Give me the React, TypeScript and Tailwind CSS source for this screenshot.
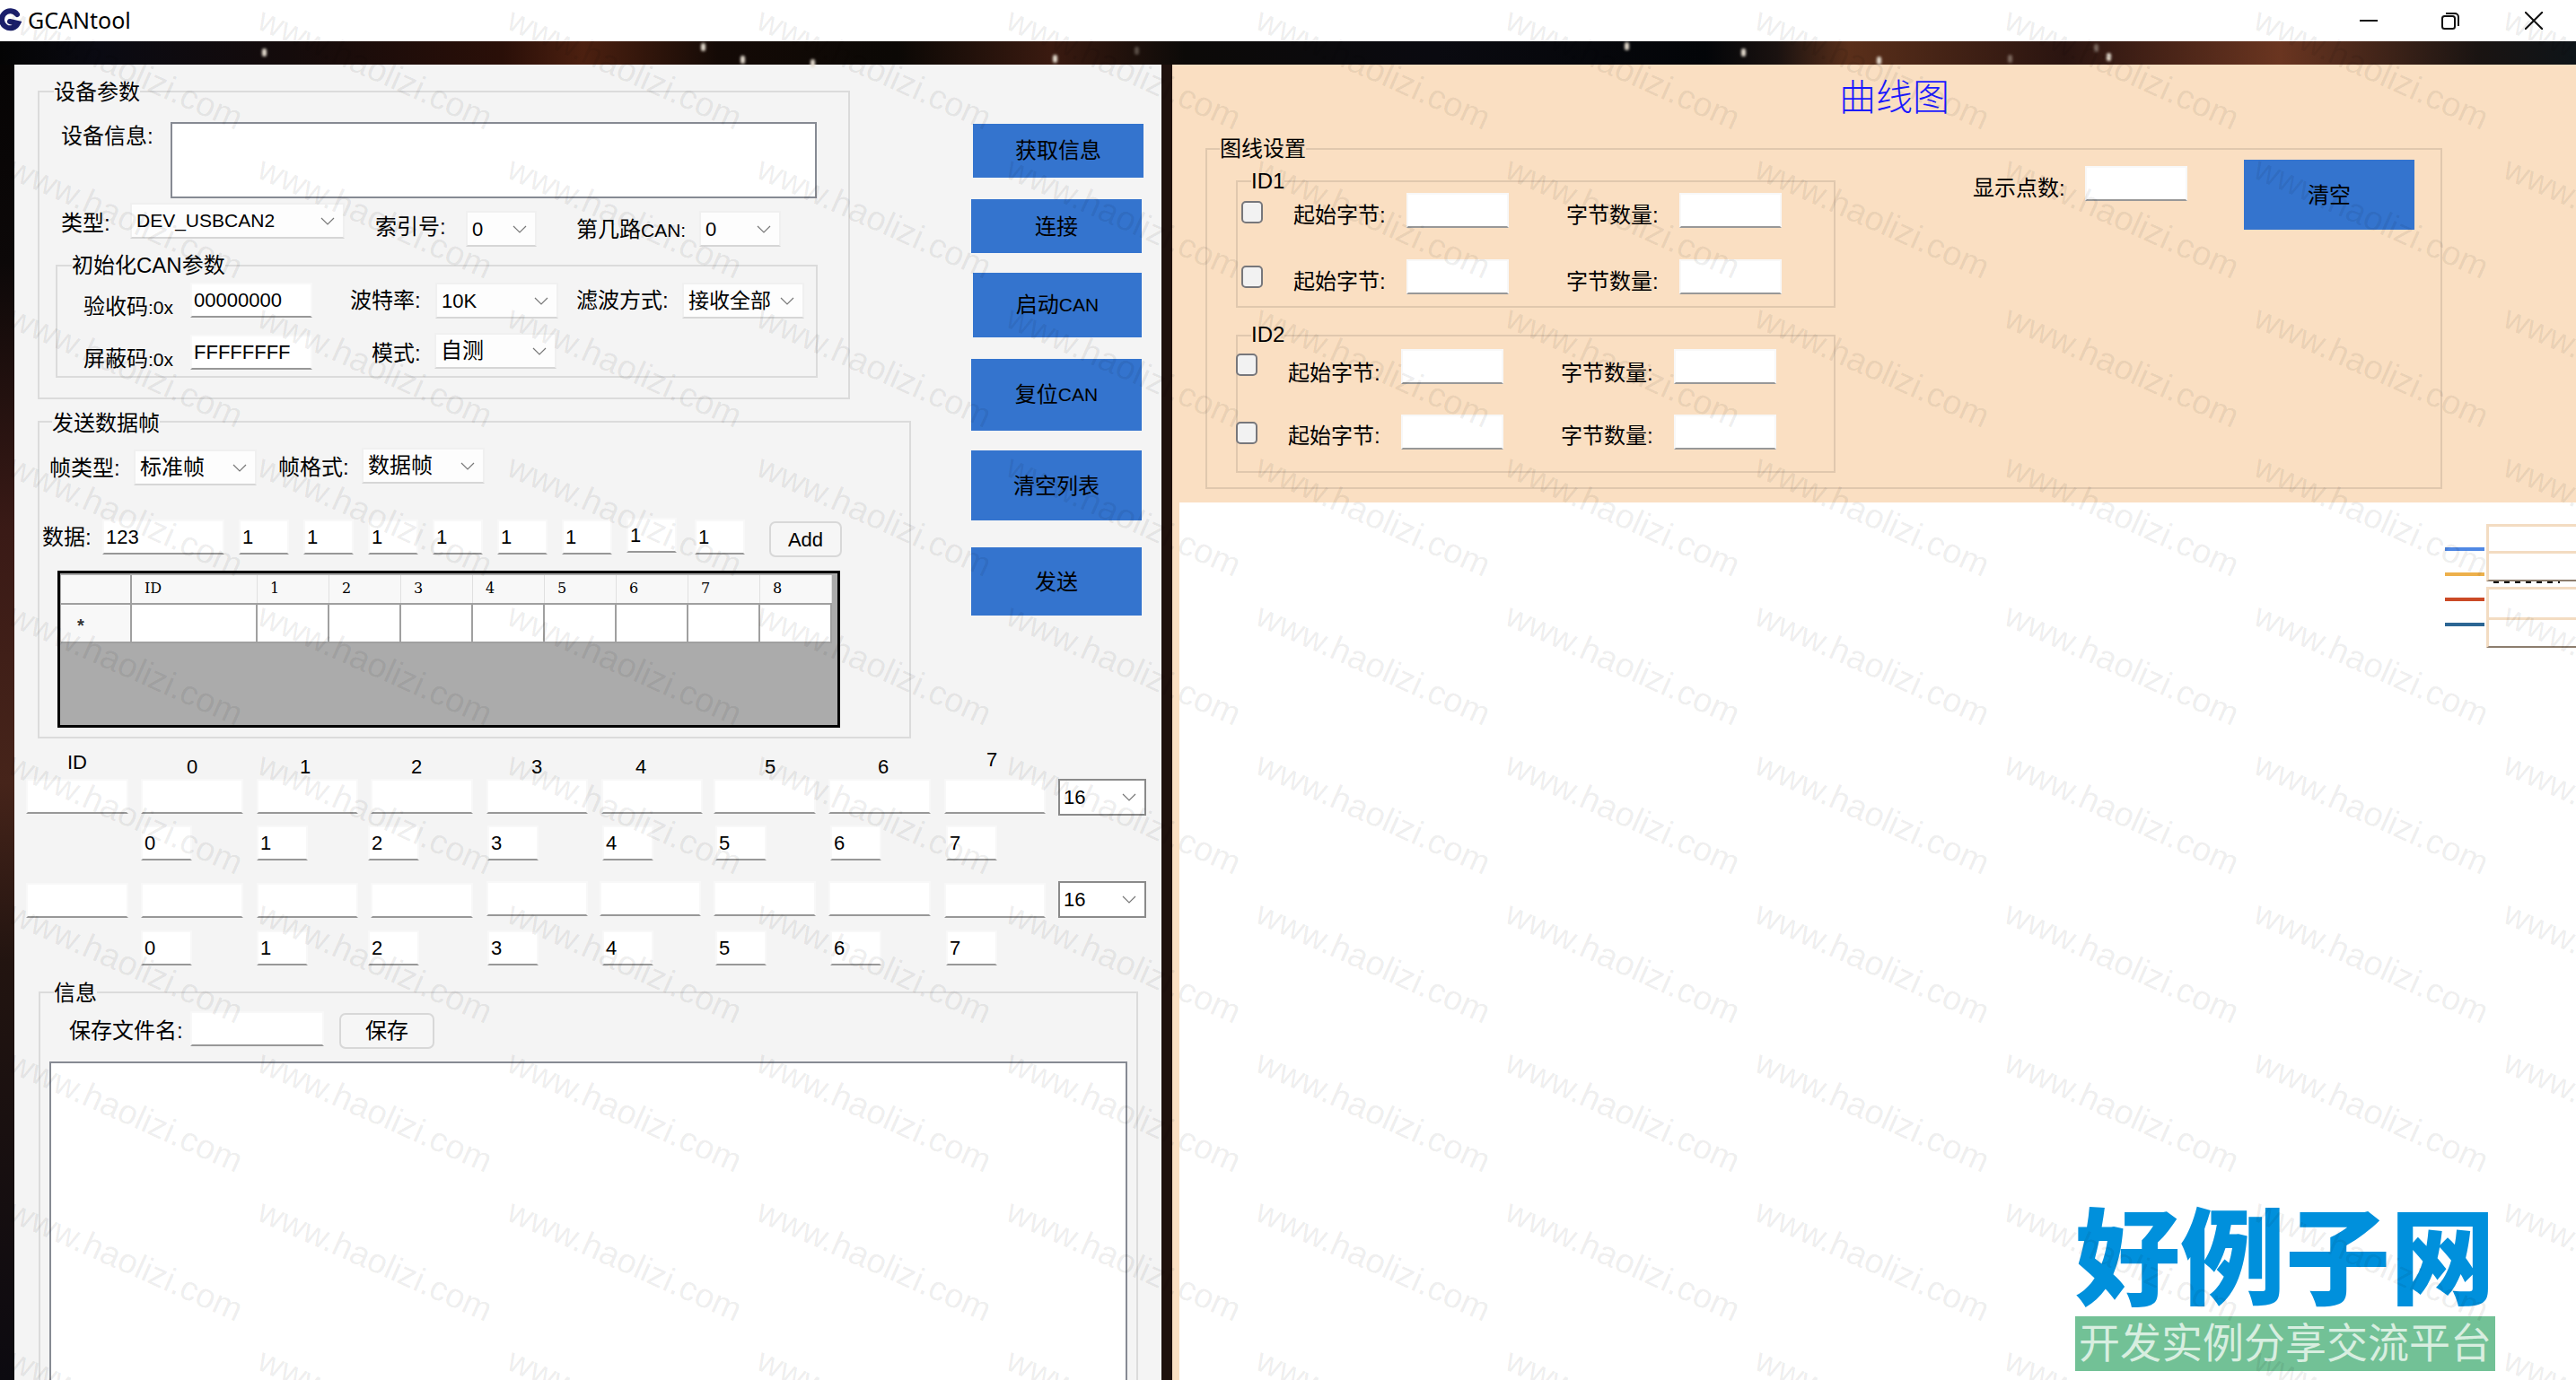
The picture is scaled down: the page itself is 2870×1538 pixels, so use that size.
import type { ReactNode } from "react";
import clsx from "clsx";

const stars = [
  "left-[292px] top-[8px]",
  "left-[781px] top-[2px]",
  "left-[825px] top-[16px]",
  "left-[903px] top-[20px]",
  "left-[1173px] top-[15px]",
  "left-[1264px] top-[6px] opacity-30",
  "left-[1810px] top-[1px]",
  "left-[1940px] top-[8px]",
  "left-[2091px] top-[17px]",
  "left-[2237px] top-[15px] opacity-40",
  "left-[2333px] top-[3px] opacity-40",
  "left-[2347px] top-[13px]",
];

function Label({ children, className }: { children: ReactNode; className?: string }) {
  return (
    <div className={clsx("h-[32px] shrink-0 whitespace-nowrap text-[24px] leading-[32px] text-black", className)}>
      {children}
    </div>
  );
}

function Can({ children }: { children: ReactNode }) {
  return <span className="text-[21px]">{children}</span>;
}

function Field({ value = "", className }: { value?: string; className?: string }) {
  return (
    <input
      readOnly
      defaultValue={value}
      className={clsx(
        "box-border block h-[39px] shrink-0 border-2 border-black/[0.03] border-b-black/40 bg-white pl-[2px] text-[22px] text-black outline-none",
        className
      )}
    />
  );
}

function Combo({ children, className }: { children: ReactNode; className?: string }) {
  return (
    <div
      className={clsx(
        "box-border flex h-[40px] shrink-0 items-center justify-between border-2 border-black/5 border-b-black/15 bg-[#fdfdfd] pl-[5px] pr-[9px] text-black",
        className
      )}
    >
      <span className="whitespace-nowrap">{children}</span>
      <svg width="16" height="9" viewBox="0 0 16 9" fill="none" stroke="#777" strokeWidth="1.2">
        <path d="M1 1l7 7 7-7" />
      </svg>
    </div>
  );
}

function BaseCombo() {
  return (
    <div className="ml-[14px] box-border flex h-[41px] w-[98px] shrink-0 items-center justify-between border-2 border-solid border-[#8a8a8a] bg-white pl-[4px] pr-[9px] text-[22px] text-black">
      <span>16</span>
      <svg width="16" height="9" viewBox="0 0 16 9" fill="none" stroke="#777" strokeWidth="1.2">
        <path d="M1 1l7 7 7-7" />
      </svg>
    </div>
  );
}

function Group({
  title,
  legend,
  className,
  children,
}: {
  title: string;
  legend: string;
  className?: string;
  children: ReactNode;
}) {
  return (
    <div className={clsx("relative box-border shrink-0 border-2 border-black/10", className)}>
      <span className={clsx("absolute whitespace-nowrap text-[24px] leading-[28px] text-black", legend)}>{title}</span>
      {children}
    </div>
  );
}

function Blue({ children, className }: { children: ReactNode; className?: string }) {
  return (
    <div className={clsx("flex shrink-0 items-center justify-center bg-[#3474ce] text-[24px] text-black", className)}>
      {children}
    </div>
  );
}

function Check({ className }: { className?: string }) {
  return (
    <input
      type="checkbox"
      readOnly
      className={clsx(
        "box-border block h-[25px] w-[24px] shrink-0 appearance-none rounded-[5px] border-2 border-[#77777b] bg-[#f2f2f2]",
        className
      )}
    />
  );
}

function Small({ value, className }: { value: string; className?: string }) {
  return <Field value={value} className={clsx("w-[57px]", className)} />;
}

function Watermark() {
  const cells = Array.from({ length: 132 });
  return (
    <div className="pointer-events-none absolute inset-0 overflow-hidden">
      <div className="absolute left-[-258px] top-[-165px] grid grid-cols-[repeat(12,278px)] auto-rows-[166px]">
        {cells.map((_, i) => (
          <span
            key={i}
            className="block origin-top-left rotate-[24deg] whitespace-nowrap text-[38px] leading-[40px] text-black/[0.08]"
          >
            www.haolizi.com
          </span>
        ))}
      </div>
    </div>
  );
}

function LeftPanel() {
  return (
    <div className="w-[1278px] shrink-0 overflow-hidden bg-[#f4f4f4]">
      <div className="flex pl-[26px] pt-[29px]">
        <div className="w-[973px] shrink-0">
          <Group title="设备参数" legend="left-[16px] top-[-14px] bg-[#f4f4f4]" className="h-[344px] w-[905px]">
            <div className="ml-[24px] mt-[33px] flex items-start">
              <Label className="w-[122px]">设备信息:</Label>
              <div className="box-border h-[85px] w-[720px] border-2 border-[#868a93] bg-white" />
            </div>
            <div className="ml-[24px] mt-[5px] flex h-[49px] items-start">
              <Label className="mt-[7px] w-[77px]">类型:</Label>
              <Combo className="w-[239px] text-[21px]">DEV_USBCAN2</Combo>
              <Label className="ml-[34px] mt-[11px] w-[101px]">索引号:</Label>
              <Combo className="mt-[9px] w-[79px] text-[22px]">0</Combo>
              <Label className="ml-[44px] mt-[14px] w-[137px]">
                第几路<Can>CAN:</Can>
              </Label>
              <Combo className="mt-[9px] w-[91px] text-[22px]">0</Combo>
            </div>
            <Group
              title="初始化CAN参数"
              legend="left-[16px] top-[-15px] bg-[#f4f4f4]"
              className="ml-[18px] mt-[20px] h-[126px] w-[849px]"
            >
              <div className="ml-[29px] mt-[18px] flex h-[56px] items-start">
                <Label className="mt-[11px] w-[119px]">
                  验收码<Can>:0x</Can>
                </Label>
                <Field value="00000000" className="w-[136px]" />
                <Label className="ml-[42px] mt-[4px] w-[95px]">波特率:</Label>
                <Combo className="w-[137px] text-[22px]">10K</Combo>
                <Label className="ml-[20px] mt-[4px] w-[118px]">滤波方式:</Label>
                <Combo className="w-[136px] text-[23px]">接收全部</Combo>
              </div>
              <div className="ml-[29px] flex items-start">
                <Label className="mt-[13px] w-[119px]">
                  屏蔽码<Can>:0x</Can>
                </Label>
                <Field value="FFFFFFFF" className="mt-[2px] w-[136px]" />
                <Label className="ml-[66px] mt-[7px] w-[70px]">模式:</Label>
                <Combo className="w-[136px] text-[24px]">自测</Combo>
              </div>
            </Group>
          </Group>

          <Group title="发送数据帧" legend="left-[14px] top-[-13px] bg-[#f4f4f4]" className="mt-[24px] h-[354px] w-[973px]">
            <div className="ml-[11px] mt-[28px] flex h-[78px] items-start">
              <Label className="mt-[7px] w-[94px]">帧类型:</Label>
              <Combo className="mt-[2px] w-[137px] text-[24px]">标准帧</Combo>
              <Label className="ml-[24px] mt-[6px] w-[93px]">帧格式:</Label>
              <Combo className="w-[137px] text-[24px]">数据帧</Combo>
            </div>
            <div className="ml-[3px] flex h-[59px] items-start">
              <Label className="mt-[6px] w-[67px]">数据:</Label>
              <Field value="123" className="mt-[2px] w-[136px]" />
              <Field value="1" className="ml-[16px] mt-[2px] w-[56px]" />
              <Field value="1" className="ml-[16px] mt-[2px] w-[56px]" />
              <Field value="1" className="ml-[16px] mt-[2px] w-[56px]" />
              <Field value="1" className="ml-[16px] mt-[2px] w-[56px]" />
              <Field value="1" className="ml-[16px] mt-[2px] w-[56px]" />
              <Field value="1" className="ml-[16px] mt-[2px] w-[56px]" />
              <Field value="1" className="ml-[16px] w-[56px]" />
              <Field value="1" className="ml-[20px] mt-[2px] w-[56px]" />
              <div className="ml-[27px] mt-[4px] box-border flex h-[40px] w-[81px] items-center justify-center rounded-[7px] border-2 border-[#d8d8d8] bg-[#f6f6f6] text-[22px] text-black">
                Add
              </div>
            </div>
            <div className="ml-[20px] box-border h-[175px] w-[872px] border-[3px] border-black bg-[#ababab] pl-[1px] pt-[2px]">
              <div className="grid h-[33px] w-[859px] grid-cols-[79px_140px_repeat(8,80px)] border-b-2 border-[#a0a0a0] bg-[#f8f8f8] text-[16px] leading-[29px] text-black [font-family:'DejaVu_Serif',serif]">
                <div className="border-r-2 border-[#a0a0a0]" />
                {["ID", "1", "2", "3", "4", "5", "6", "7", "8"].map((h) => (
                  <div key={h} className="border-r border-[#e0e0e0] pl-[14px]">
                    {h}
                  </div>
                ))}
              </div>
              <div className="grid h-[43px] w-[859px] grid-cols-[79px_140px_repeat(8,80px)] border-b-2 border-[#a0a0a0] bg-white">
                <div className="flex items-center border-r-2 border-[#a0a0a0] bg-[#f8f8f8] pl-[18px] pt-[4px] text-[20px] font-bold text-[#333]">
                  *
                </div>
                {Array.from({ length: 9 }).map((_, i) => (
                  <div key={i} className="border-r-2 border-[#a0a0a0]" />
                ))}
              </div>
            </div>
          </Group>
        </div>

        <div className="ml-[67px] mt-[37px] w-[192px] shrink-0">
          <Blue className="ml-[2px] h-[60px] w-[190px]">获取信息</Blue>
          <Blue className="mt-[24px] h-[60px] w-[190px] pt-[2px]">连接</Blue>
          <Blue className="ml-[2px] mt-[22px] h-[72px] w-[188px]">
            启动<Can>CAN</Can>
          </Blue>
          <Blue className="mt-[24px] h-[80px] w-[190px]">
            复位<Can>CAN</Can>
          </Blue>
          <Blue className="mt-[22px] h-[78px] w-[190px] pt-[2px]">清空列表</Blue>
          <Blue className="mt-[30px] h-[76px] w-[190px] pt-[2px]">发送</Blue>
        </div>
      </div>

      <div className="pl-[13px] text-[22px] text-black">
        <div className="flex h-[45px] text-center">
          <span className="mt-[13px] h-[28px] w-[114px] leading-[28px]">ID</span>
          <span className="ml-[14px] mt-[18px] h-[28px] w-[114px] leading-[28px]">0</span>
          <span className="ml-[12px] mt-[18px] h-[28px] w-[114px] leading-[28px]">1</span>
          <span className="ml-[10px] mt-[18px] h-[28px] w-[114px] leading-[28px]">2</span>
          <span className="ml-[20px] mt-[18px] h-[28px] w-[114px] leading-[28px]">3</span>
          <span className="ml-[2px] mt-[18px] h-[28px] w-[114px] leading-[28px]">4</span>
          <span className="ml-[30px] mt-[18px] h-[28px] w-[114px] leading-[28px]">5</span>
          <span className="ml-[12px] mt-[18px] h-[28px] w-[114px] leading-[28px]">6</span>
          <span className="ml-[7px] mt-[10px] h-[28px] w-[114px] leading-[28px]">7</span>
        </div>
        <div className="flex items-start">
          <Field className="w-[114px]" />
          <Field className="ml-[14px] w-[114px]" />
          <Field className="ml-[15px] w-[113px]" />
          <Field className="ml-[14px] w-[114px]" />
          <Field className="ml-[15px] w-[113px]" />
          <Field className="ml-[15px] w-[113px]" />
          <Field className="ml-[12px] w-[114px]" />
          <Field className="ml-[14px] w-[114px]" />
          <Field className="ml-[15px] w-[113px]" />
          <BaseCombo />
        </div>
        <div className="mt-[11px] flex items-start">
          <Small value="0" className="ml-[128px]" />
          <Small value="1" className="ml-[72px]" />
          <Small value="2" className="ml-[67px]" />
          <Small value="3" className="ml-[76px]" />
          <Small value="4" className="ml-[71px]" />
          <Small value="5" className="ml-[69px]" />
          <Small value="6" className="ml-[71px]" />
          <Small value="7" className="ml-[72px]" />
        </div>
        <div className="mt-[23px] flex items-start">
          <Field className="mt-[2px] w-[114px]" />
          <Field className="ml-[14px] mt-[2px] w-[114px]" />
          <Field className="ml-[15px] mt-[2px] w-[113px]" />
          <Field className="ml-[14px] mt-[2px] w-[114px]" />
          <Field className="ml-[15px] w-[113px]" />
          <Field className="ml-[13px] w-[113px]" />
          <Field className="ml-[14px] w-[114px]" />
          <Field className="ml-[14px] w-[114px]" />
          <Field className="ml-[15px] mt-[2px] w-[113px]" />
          <BaseCombo />
        </div>
        <div className="mt-[14px] flex items-start">
          <Small value="0" className="ml-[128px]" />
          <Small value="1" className="ml-[72px]" />
          <Small value="2" className="ml-[67px]" />
          <Small value="3" className="ml-[76px]" />
          <Small value="4" className="ml-[71px]" />
          <Small value="5" className="ml-[69px]" />
          <Small value="6" className="ml-[71px]" />
          <Small value="7" className="ml-[72px]" />
        </div>
        <Group title="信息" legend="left-[15px] top-[-14px] bg-[#f4f4f4]" className="ml-[14px] mt-[29px] h-[460px] w-[1225px]">
          <div className="ml-[32px] mt-[20px] flex h-[56px] items-start">
            <Label className="mt-[6px] w-[135px]">保存文件名:</Label>
            <Field className="w-[149px]" />
            <div className="ml-[17px] mt-[2px] box-border flex h-[40px] w-[106px] items-center justify-center rounded-[7px] border-2 border-[#d8d8d8] bg-[#f6f6f6] text-[24px]">
              保存
            </div>
          </div>
          <div className="ml-[10px] box-border h-[400px] w-[1201px] border-2 border-[#868a93] bg-white" />
        </Group>
      </div>
    </div>
  );
}

function ByteRow({
  check,
  label,
  inset,
}: {
  check: string;
  label: string;
  inset: string;
}) {
  return (
    <div className={clsx("flex items-start", inset)}>
      <Check className={check} />
      <Label className={clsx("ml-[34px] w-[126px]", label)}>起始字节:</Label>
      <Field className="w-[114px]" />
      <Label className={clsx("ml-[64px] w-[126px]", label)}>字节数量:</Label>
      <Field className="w-[114px]" />
    </div>
  );
}

function RightPanel() {
  return (
    <div className="flex w-[1564px] shrink-0 flex-col bg-[#fadfc2]">
      <div className="h-[488px] shrink-0">
        <div className="ml-[743px] mt-[13px] h-[48px] w-[130px] whitespace-nowrap text-[41px] font-light leading-[48px] text-[#1a1aff]">
          曲线图
        </div>
        <Group title="图线设置" legend="left-[14px] top-[-15px] bg-[#fadfc2]" className="ml-[37px] mt-[32px] h-[380px] w-[1378px]">
          <div className="flex items-start">
            <div className="ml-[32px] w-[668px] shrink-0">
              <Group title="ID1" legend="left-[15px] top-[-15px] bg-[#fadfc2]" className="mt-[34px] h-[142px] w-[668px]">
                <ByteRow inset="ml-[4px] mt-[12px]" check="mt-[9px]" label="mt-[9px]" />
                <ByteRow inset="ml-[4px] mt-[33px]" check="mt-[7px]" label="mt-[9px]" />
              </Group>
              <Group title="ID2" legend="left-[15px] top-[-16px] bg-[#fadfc2]" className="mt-[30px] h-[154px] w-[668px]">
                <ByteRow inset="ml-[-2px] mt-[14px]" check="mt-[5px]" label="mt-[11px]" />
                <ByteRow inset="ml-[-2px] mt-[30px]" check="mt-[8px]" label="mt-[8px]" />
              </Group>
            </div>
            <Label className="ml-[153px] mt-[27px] w-[125px]">显示点数:</Label>
            <Field className="mt-[18px] w-[114px]" />
            <Blue className="ml-[63px] mt-[11px] h-[78px] w-[190px] pt-[2px]">清空</Blue>
          </div>
        </Group>
      </div>
      <div className="relative ml-[8px] flex min-h-0 flex-1 justify-end overflow-hidden bg-white">
        <div className="mt-[50px] flex w-[44px] shrink-0 flex-col gap-[24px]">
          <div className="h-[4px] bg-[#5088e4]" />
          <div className="h-[4px] bg-[#edb04c]" />
          <div className="h-[4px] bg-[#cb4a26]" />
          <div className="h-[4px] bg-[#2c6694]" />
        </div>
        <div className="ml-[2px] mt-[24px] w-[100px] shrink-0">
          <div className="box-border h-[30px] border-l-[3px] border-t-[3px] border-[#f3dcc2]" />
          <div className="box-border h-[34px] border-b-2 border-l-[3px] border-t-[3px] border-[#f3dcc2] border-b-[#8c7d6e]" />
          <div className="ml-[8px] h-[2px] w-[74px] overflow-hidden bg-[repeating-linear-gradient(90deg,#000_0_6px,#fff_6px_12px)]" />
          <div className="mt-[4px] box-border h-[34px] border-l-[3px] border-t-[3px] border-[#f3dcc2]" />
          <div className="box-border h-[34px] border-b-2 border-l-[3px] border-t-[3px] border-[#f3dcc2] border-b-[#8c7d6e]" />
        </div>
        <div className="absolute bottom-[10px] right-[90px] w-[468px]">
          <div className="whitespace-nowrap text-[117px] font-black leading-[118px] text-[#0090dc]">好例子网</div>
          <div className="mt-[3px] flex h-[61px] items-center justify-center whitespace-nowrap bg-[#72c196] text-[46px] leading-[61px] text-[#d8eee0]">
            开发实例分享交流平台
          </div>
        </div>
      </div>
    </div>
  );
}

export default function App() {
  return (
    <div className="relative flex h-[1538px] w-[2870px] flex-col overflow-hidden bg-white [font-family:'Liberation_Sans','Noto_Sans_CJK_SC',sans-serif]">
      <div className="flex h-[46px] shrink-0 items-center bg-white">
        <svg width="26" height="28" viewBox="0 0 26 28" fill="none" stroke="#1b1f6b" strokeWidth="6" strokeLinecap="round">
          <path d="M19 7A9.5 9.5 0 1 0 20 17L11 15" />
        </svg>
        <span className="ml-[5px] text-[25px] text-black [font-family:'Noto_Sans',sans-serif]">GCANtool</span>
        <div className="ml-auto mr-[37px] flex items-center">
          <svg width="20" height="20" viewBox="0 0 20 20" stroke="#111" strokeWidth="2" fill="none">
            <path d="M0 10h20" />
          </svg>
          <svg className="ml-[71px]" width="20" height="20" viewBox="0 0 20 20" stroke="#111" strokeWidth="2" fill="none">
            <rect x="1" y="5" width="14" height="14" rx="2.5" />
            <path d="M5 2h10a4 4 0 0 1 4 4v10" />
          </svg>
          <svg className="ml-[73px]" width="20" height="20" viewBox="0 0 20 20" stroke="#111" strokeWidth="2" fill="none">
            <path d="M0 0l20 20M20 0L0 20" />
          </svg>
        </div>
      </div>

      <div className="relative h-[26px] shrink-0 bg-[linear-gradient(90deg,#040404_0px,#0a0a12_110px,#140b0b_320px,#2a0f08_560px,#4c2010_650px,#140a06_800px,#0b0805_1000px,#3a1a10_1170px,#0c0a08_1320px,#0a0a10_1600px,#030508_1900px,#1a1210_1980px,#5a2f1a_2060px,#2a1410_2300px,#6a3520_2540px,#1a1412_2760px,#0e1418_2870px)]">
        {stars.map((s) => (
          <div key={s} className={clsx("absolute h-[9px] w-[5px] rounded-full bg-[#e6ddd0] blur-[1.5px]", s)} />
        ))}
      </div>

      <div className="flex min-h-0 flex-1">
        <div className="w-[16px] shrink-0 bg-[linear-gradient(180deg,#060404_0px,#0c0808_220px,#3a1a16_520px,#46241a_800px,#221410_1000px,#0c0a10_1466px)]" />
        <LeftPanel />
        <div className="w-[12px] shrink-0 bg-[#1f110d]" />
        <RightPanel />
      </div>

      <Watermark />
    </div>
  );
}
